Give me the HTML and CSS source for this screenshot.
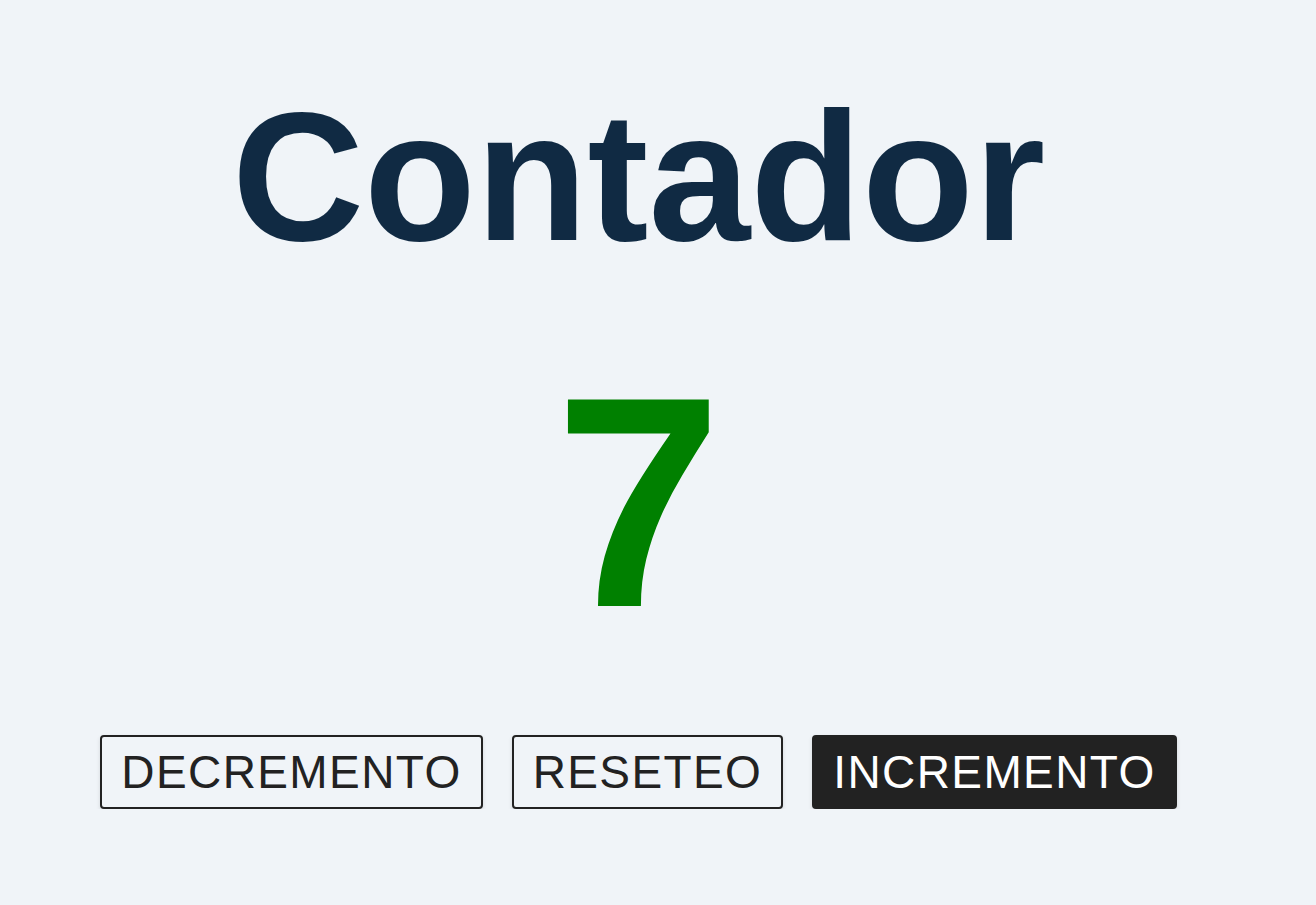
FILE: index.html
```html
<!DOCTYPE html>
<html lang="es">
<head>
<meta charset="utf-8">
<title>Contador</title>
<link rel="stylesheet" href="styles.css">
</head>
<body>
<main class="app">
  <h1 class="title">Contador</h1>
  <div class="count">7</div>
  <div class="actions">
    <button class="btn">DECREMENTO</button>
    <button class="btn">RESETEO</button>
    <button class="btn btn-dark">INCREMENTO</button>
  </div>
</main>
</body>
</html>
```
FILE: styles.css
```css
html, body {
  margin: 0;
  padding: 0;
  background: #f0f4f8;
}
body {
  font-family: "Liberation Sans", Arial, sans-serif;
}
.app {
  width: 1277px;
  padding-top: 71px;
  display: flex;
  flex-direction: column;
  align-items: center;
}
.title {
  margin: 0;
  font-size: 183px;
  font-weight: 700;
  line-height: normal;
  color: #102a43;
}
.count {
  margin-top: 47px;
  font-size: 300px;
  font-weight: 700;
  line-height: normal;
  color: #008000;
}
.actions {
  margin-top: 60px;
  display: flex;
  gap: 29px;
}
.btn {
  font-family: "Liberation Sans", Arial, sans-serif;
  font-size: 46px;
  letter-spacing: 1.4px;
  padding: 8px 19px;
  border: 2px solid #222;
  border-radius: 4px;
  background: #f0f4f8;
  color: #222;
  line-height: normal;
  box-shadow: 0 2px 4px rgba(0,0,0,0.12);
  cursor: pointer;
}
.btn-dark {
  background: #222;
  color: #fff;
}
```
